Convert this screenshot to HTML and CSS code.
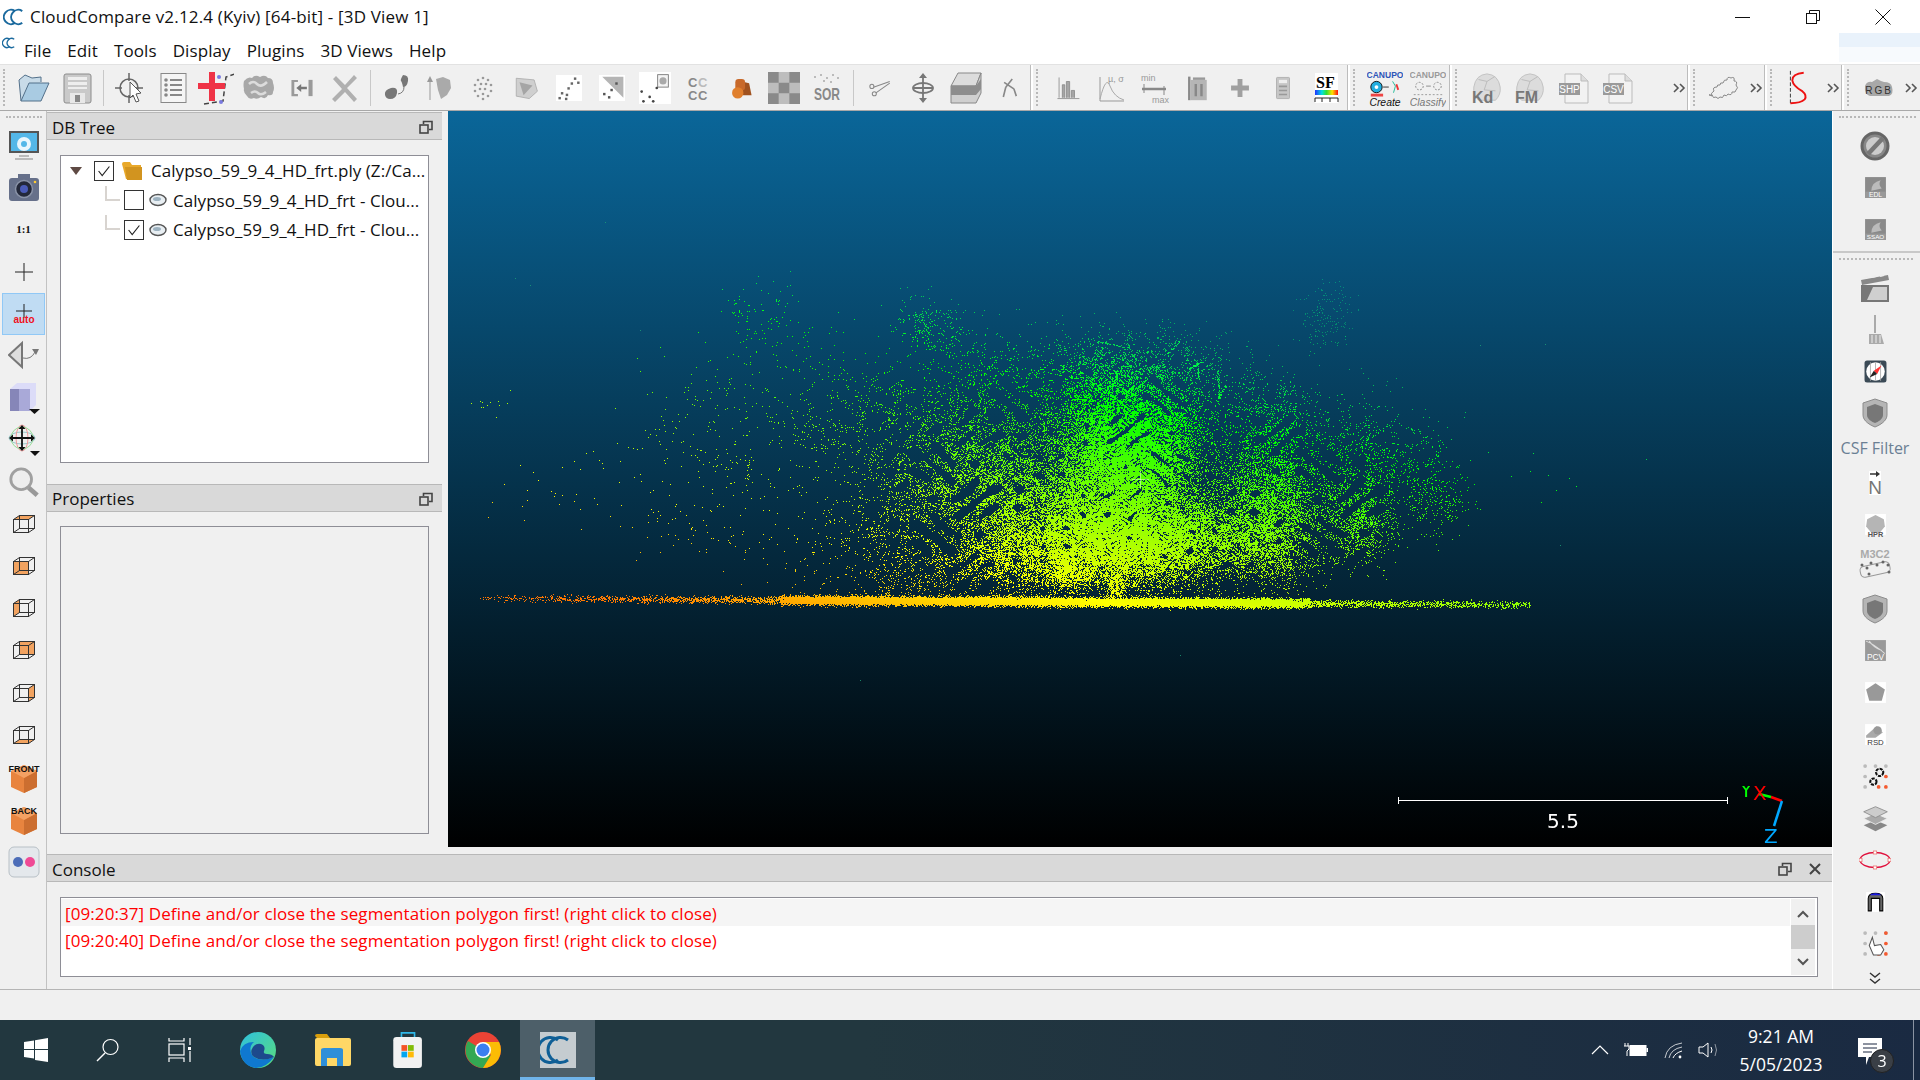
FILE: index.html
```html
<!DOCTYPE html>
<html>
<head>
	<meta charset="utf-8" />
	<title>CloudCompare</title>
	<link rel="stylesheet" href="styles.css">
</head>
<body>
	<svg class="defs" width="0" height="0">
		<symbol id="logo" viewBox="0 0 24 24"><g fill="none" stroke="#1b6a9e" stroke-width="2.2"><path d="M13 5.500A7.800 7.800 0 1 0 13 18.500"/><path d="M21 5.500A7.800 7.800 0 1 0 21 18.500"/></g></symbol>
		<symbol id="float" viewBox="0 0 14 14"><g fill="none" stroke="#444" stroke-width="1.6"><rect x="1" y="5" width="8" height="8"/><path d="M4.5 4V1.500h8.500v8h-3"/></g></symbol>
		<symbol id="chev" viewBox="0 0 14 14"><g fill="none" stroke="#555" stroke-width="1.600"><path d="M2 3l4 4-4 4M8 3l4 4-4 4"/></g></symbol>
		<symbol id="shield" viewBox="0 0 32 32"><path d="M16 2l12 4v12c0 6-7 10-12 12C11 28 4 24 4 18V6z" fill="#b5b5b5" stroke="#8c8c8c"/><path d="M16 7l8 3v8c0 4-5 7-8 8-3-1-8-4-8-8v-8z" fill="#777"/></symbol>
		<symbol id="cloudico" viewBox="0 0 18 14"><ellipse cx="9" cy="7" rx="8" ry="5.500" fill="#e8eef2" stroke="#555" stroke-width="1.400"/><ellipse cx="8" cy="6" rx="4" ry="2" fill="#9db2c0"/></symbol>
		<symbol id="wbox" viewBox="0 0 32 32"><g fill="none" stroke="#333" stroke-width="1"><rect x="5.500" y="10.500" width="15" height="13"/><rect x="11.500" y="6.500" width="15" height="13"/><path d="M5.500 10.500l6-4M20.500 10.500l6-4M20.500 23.500l6-4M5.500 23.500l6-4"/></g></symbol>
	</svg>

	<div class="titlebar">
		<svg class="title-icon"><use href="#logo"/></svg>
		<span class="title-text">CloudCompare v2.12.4 (Kyiv) [64-bit] - [3D View 1]</span>
		<div class="win-btns">
			<svg class="win-btn" viewBox="0 0 16 16"><path d="M0 8.500h15" stroke="#111" fill="none"/></svg>
			<svg class="win-btn" viewBox="0 0 16 16"><g fill="none" stroke="#111"><rect x="1.500" y="4.500" width="10" height="10"/><path d="M4.500 4.500v-3h10v10h-3"/></g></svg>
			<svg class="win-btn" viewBox="0 0 16 16"><path d="M.5.500l15 15M15.500.500l-15 15" stroke="#111" fill="none"/></svg>
		</div>
	</div>

	<div class="menubar">
		<svg class="menu-icon"><use href="#logo"/></svg>
		<span class="menu-item">File</span>
		<span class="menu-item">Edit</span>
		<span class="menu-item">Tools</span>
		<span class="menu-item">Display</span>
		<span class="menu-item">Plugins</span>
		<span class="menu-item">3D Views</span>
		<span class="menu-item">Help</span>
		<div class="menu-tint"></div>
	</div>

	<div class="toolbar">
		<div class="tgroup tgroup-main">
			<span class="handle"></span>
			<span class="tool"><svg viewBox="0 0 32 32"><path d="M3 29L1 8l6-5 7 3 9-1v5" fill="#c8dbe8" stroke="#53708a"/><path d="M3 29l8-18h20l-8 18z" fill="#a9cbe2" stroke="#53708a"/></svg></span>
			<span class="tool"><svg viewBox="0 0 32 32"><rect x="3" y="2" width="27" height="29" rx="2" fill="#c9c9c9" stroke="#8c8c8c"/><path d="M7 5h19v3H7zM7 10h19v3H7zM7 15h19v2H7z" fill="#eee"/><rect x="9" y="21" width="15" height="10" fill="#e8e8e8"/><rect x="14" y="23" width="5" height="7" fill="#888"/></svg></span>
			<span class="tsep"></span>
			<span class="tool"><svg viewBox="0 0 32 32"><g fill="none" stroke="#666" stroke-width="1.500"><circle cx="15" cy="16" r="9"/><path d="M15 1v8M15 23v8M1 16h7M22 16h7"/></g><path d="M16 10l11 11-5 1 3 7-3 1-3-7-3 3z" fill="#fff" stroke="#555"/></svg></span>
			<span class="tool"><svg viewBox="0 0 32 32"><rect x="4" y="1.500" width="25" height="29" fill="#f5f5f5" stroke="#888"/><g fill="#888"><circle cx="9" cy="8" r="1.800"/><circle cx="9" cy="13" r="1.800"/><circle cx="9" cy="18" r="1.800"/><circle cx="9" cy="23" r="1.800"/><path d="M13 7h12v2H13zM13 12h12v2H13zM13 17h12v2H13zM13 22h12v2H13z"/></g></svg></span>
			<span class="tool tool-cut"><svg viewBox="0 0 36 34"><path d="M6 33l19-3 3-24 9-3" fill="none" stroke="#444" stroke-width="1.500" stroke-dasharray="5 3"/><circle cx="21" cy="6" r="2" fill="#7a7ae0"/><circle cx="23" cy="31" r="2" fill="#7a7ae0"/><path d="M11 1h6v11h10v6H17v12h-6V18H0v-6h11z" fill="#ef3346"/></svg></span>
			<span class="tool"><svg viewBox="0 0 32 32"><path d="M1 9q4-5 8-3 3-4 8-1 5-3 8 1 5 0 5 5 2 5 0 9 0 4-5 3-2 5-7 2-4 3-7 1-5 2-7-2-4-4-3-7-1-4 0-8z" fill="#a8a8a8"/><path d="M6 12q4-4 8 0t10-2M8 21q4-3 7 0t8-1" stroke="#dcdcdc" stroke-width="2.500" fill="none"/></svg></span>
			<span class="tool tool-sm"><svg viewBox="0 0 32 32"><g fill="#9a9a9a"><path d="M3 6h8v2.500H6.500v15H11V26H3z"/><path d="M29 6h-5v20h5z"/><path d="M9 16l6-5v3.500h7v3h-7V21z" fill="#777"/></g></svg></span>
			<span class="tool"><svg viewBox="0 0 32 32"><path d="M7 4l9 9 9-10 3 3-10 10 10 11-3 3-9-10-10 10-3-3 10-10L4 7z" fill="#b0b0b0"/></svg></span>
			<span class="tsep"></span>
			<span class="tool"><svg viewBox="0 0 32 32"><path d="M22 3q6 0 5 6t-5 6q-1-5-2-6t2-6zM4 23q-1-5 6-7 7-1 6 5t-7 6q-4 0-5-4z" fill="#777"/><path d="M23 15q0 6-6 7" stroke="#777" fill="none"/></svg></span>
			<span class="tool"><svg viewBox="0 0 32 32"><path d="M6 28V8" stroke="#999" fill="none"/><path d="M6 4L3 10h6z" fill="#999"/><path d="M12 7l7-2 7 3 1 8-4 7-6 4-3-9z" fill="#aaa"/></svg></span>
			<span class="tool"><svg viewBox="0 0 32 32"><g fill="#999"><circle cx="16" cy="6" r="1.300"/><circle cx="11" cy="8" r="1.300"/><circle cx="21" cy="8" r="1.300"/><circle cx="8" cy="13" r="1.300"/><circle cx="14" cy="12" r="1.300"/><circle cx="19" cy="12" r="1.300"/><circle cx="24" cy="13" r="1.300"/><circle cx="8" cy="19" r="1.300"/><circle cx="13" cy="17" r="1.300"/><circle cx="18" cy="17" r="1.300"/><circle cx="24" cy="19" r="1.300"/><circle cx="11" cy="24" r="1.300"/><circle cx="16" cy="22" r="1.300"/><circle cx="21" cy="24" r="1.300"/><circle cx="16" cy="27" r="1.300"/></g></svg></span>
			<span class="tool tool-sm"><svg viewBox="0 0 32 32"><path d="M4 4l22 2 4 14-10 9-16-3z" fill="#cfcfcf" stroke="#aaa"/><path d="M8 9l16 4-11 12z" fill="#a5a5a5"/></svg></span>
			<span class="tool tool-sm"><svg viewBox="0 0 32 32"><rect width="32" height="32" fill="#fff"/><g fill="#666"><rect x="22" y="3" width="3" height="3"/><rect x="26" y="8" width="3" height="3"/><rect x="18" y="9" width="3" height="3"/><rect x="14" y="15" width="3" height="3"/><rect x="6" y="21" width="3" height="3"/><rect x="12" y="23" width="3" height="3"/><rect x="3" y="27" width="3" height="3"/><rect x="11" y="28" width="3" height="3"/></g></svg></span>
			<span class="tool tool-sm"><svg viewBox="0 0 32 32"><rect width="32" height="32" fill="#fff"/><path d="M4 2h26v26z" fill="#b5b5b5"/><g fill="#555"><rect x="20" y="9" width="3" height="3"/><rect x="14" y="17" width="3" height="3"/><rect x="5" y="22" width="3" height="3"/><rect x="11" y="26" width="3" height="3"/></g></svg></span>
			<span class="tool"><svg viewBox="0 0 36 36"><rect width="36" height="36" fill="#fff"/><rect x="21" y="3" width="12" height="14" fill="#f5f5f5" stroke="#777"/><circle cx="27" cy="10" r="4" fill="#aaa"/><g fill="#444"><circle cx="3" cy="22" r="1.500"/><circle cx="5" cy="33" r="1.500"/><circle cx="12" cy="28" r="1.500"/><circle cx="16" cy="33" r="1.500"/><circle cx="20" cy="18" r="1.500"/></g></svg></span>
			<span class="tool"><svg viewBox="0 0 32 32"><text x="6" y="15" class="svg-b" font-size="13" fill="#888">C</text><text x="16" y="15" class="svg-b" font-size="13" fill="#bbb">C</text><text x="6" y="28" class="svg-b" font-size="13" fill="#888">C</text><text x="16" y="28" class="svg-b" font-size="13" fill="#888">C</text></svg></span>
			<span class="tool tool-sm"><svg viewBox="0 0 32 32"><path d="M17 8l9 2 3 15H18z" fill="#a0521f"/><rect x="9" y="5" width="12" height="14" rx="4" fill="#c8692a"/><circle cx="12" cy="22" r="7" fill="#e07f2d"/></svg></span>
			<span class="tool"><svg viewBox="0 0 33 33"><rect width="33" height="33" fill="#8a8a8a"/><path d="M11 0h11v11H11zM0 11h11v11H0zM22 11h11v11H22zM11 22h11v11H11z" fill="#bdbdbd"/></svg></span>
			<span class="tool"><svg viewBox="0 0 32 32"><g fill="#aaa"><circle cx="4" cy="5" r="1"/><circle cx="10" cy="3" r="1"/><circle cx="16" cy="6" r="1"/><circle cx="22" cy="3" r="1"/><circle cx="27" cy="6" r="1"/><circle cx="13" cy="9" r="1"/><circle cx="20" cy="10" r="1"/></g><text x="3" y="28" class="svg-b" font-size="17" fill="#888" textLength="26" lengthAdjust="spacingAndGlyphs">SOR</text></svg></span>
			<span class="tsep"></span>
			<span class="tool tool-sm"><svg viewBox="0 0 32 32"><g fill="none" stroke="#888" stroke-width="1.300"><circle cx="6" cy="14" r="2.500"/><circle cx="9" cy="23" r="2.500"/><path d="M8 15l20-7M11 22l17-12" /></g></svg></span>
			<span class="tool"><svg viewBox="0 0 32 32"><g fill="none" stroke="#777" stroke-width="1.800"><path d="M16 4v24M6 16h20"/><ellipse cx="16" cy="16" rx="10" ry="5"/></g><path d="M16 1l-4 5h8zM16 31l-4-5h8z" fill="#777"/></svg></span>
			<span class="tool"><svg viewBox="0 0 32 32"><path d="M1 14L8 1h23l-5 13z" fill="#dcdcdc" stroke="#888"/><path d="M1 14h25l5-13v20l-5 10H1z" fill="#cfcfcf" stroke="#888"/><path d="M1 14h25l5-7v10l-5 6H1z" fill="#8d8d8d"/></svg></span>
			<span class="tool tool-sm"><svg viewBox="0 0 32 32"><g fill="none" stroke="#888" stroke-width="2"><path d="M20 5l-8 10M10 9l12 8M12 15l-3 12M22 17l3 9"/></g></svg></span>
		</div>
		<div class="tgroup tgroup-sf">
			<span class="handle"></span>
			<span class="tool tool-sm"><svg viewBox="0 0 32 32"><path d="M5 3v25M9 28V12h3v16M14 28V8h4v20M20 28V19h4v9M3 29h27" stroke="#888" fill="#a5a5a5" stroke-width="1"/></svg></span>
			<span class="tool"><svg viewBox="0 0 32 32"><path d="M5 5v24h24" stroke="#999" fill="none"/><path d="M5 27Q11 3 15 14t14 14" stroke="#aaa" fill="none"/><text x="13" y="10" font-size="9" fill="#999" class="svg-t">µ, σ</text></svg></span>
			<span class="tool"><svg viewBox="0 0 32 32"><text x="3" y="9" font-size="9" fill="#999" class="svg-t">min</text><text x="14" y="31" font-size="9" fill="#999" class="svg-t">max</text><path d="M4 17h24" stroke="#888" stroke-width="2.500"/><path d="M6 12v9M26 14v9" stroke="#888"/></svg></span>
			<span class="tool tool-sm"><svg viewBox="0 0 32 32"><path d="M5 2h3v29H5z" fill="#8a8a8a"/><rect x="8" y="6" width="20" height="25" fill="#b5b5b5"/><path d="M11 3h15v3H11z" fill="#999"/><path d="M13 11h3v15h-3zM20 11h3v15h-3z" fill="#888"/></svg></span>
			<span class="tool tool-sm"><svg viewBox="0 0 32 32"><path d="M13 5h6v8h8v6h-8v8h-6v-8H5v-6h8z" fill="#a0a0a0"/></svg></span>
			<span class="tool tool-sm"><svg viewBox="0 0 32 32"><rect x="8" y="3" width="16" height="26" rx="1" fill="#c6c6c6" stroke="#aaa"/><rect x="11" y="6" width="10" height="4" fill="#eee"/><path d="M11 13h10v2H11zM11 18h10v2H11zM11 23h10v2H11z" fill="#999"/></svg></span>
			<span class="tool"><svg viewBox="0 0 32 32"><rect x="5" y="1" width="23" height="30" fill="#fff"/><text x="6" y="16" font-size="16" fill="#000" class="svg-serif">SF</text><defs><linearGradient id="rainbow"><stop offset="0" stop-color="#2030ff"/><stop offset=".3" stop-color="#00e0e0"/><stop offset=".5" stop-color="#30e030"/><stop offset=".75" stop-color="#ffe000"/><stop offset="1" stop-color="#ff1010"/></linearGradient></defs><rect x="5" y="18" width="23" height="5" fill="url(#rainbow)"/><path d="M5 26h23M5 26v4M12 26v4M20 26v4M28 26v4" stroke="#222" fill="none"/></svg></span>
		</div>
		<div class="tgroup tgroup-canupo">
			<span class="handle"></span>
			<span class="tool tool-tall"><svg viewBox="0 0 38 40"><text x="19" y="9" text-anchor="middle" font-size="9" fill="#2c55b8" class="svg-b">CANUPO</text><circle cx="10" cy="19" r="6" fill="#22aee0" stroke="#111"/><circle cx="10" cy="19" r="2" fill="#fff"/><path d="M17 19h6" stroke="#333"/><path d="M27 13l3 5-2 7" stroke="#2b9" fill="none"/><path d="M31 16l2 6" stroke="#e33" stroke-width="2"/><rect x="4" y="26" width="13" height="3" fill="#ee4444"/><text x="19" y="39" text-anchor="middle" font-size="11" fill="#111" class="svg-t" font-style="italic">Create</text></svg></span>
			<span class="tool tool-tall"><svg viewBox="0 0 38 40"><text x="19" y="9" text-anchor="middle" font-size="9" fill="#999" class="svg-b">CANUPO</text><g fill="none" stroke="#888" stroke-dasharray="2 1.500"><circle cx="10" cy="18" r="4"/><circle cx="29" cy="18" r="4"/></g><path d="M17 18h5" stroke="#888"/><path d="M4 27h30" stroke="#999" stroke-dasharray="2 2"/><text x="19" y="39" text-anchor="middle" font-size="11" fill="#777" class="svg-t" font-style="italic">Classify</text></svg></span>
		</div>
		<div class="tgroup tgroup-files">
			<span class="handle"></span>
			<span class="tool"><svg viewBox="0 0 34 34"><path d="M3 16Q5 3 17 2q12 1 14 14 1 8-5 14H8Q2 24 3 16z" fill="#dcdcdc" stroke="#c0c0c0"/><path d="M8 8l9 2 8-5M17 10l-3 9 12 1" stroke="#bbb" fill="none"/><text x="1" y="33" class="svg-b" font-size="17" fill="#777">Kd</text></svg></span>
			<span class="tool"><svg viewBox="0 0 34 34"><path d="M3 16Q5 3 17 2q12 1 14 14 1 8-5 14H8Q2 24 3 16z" fill="#dcdcdc" stroke="#c0c0c0"/><path d="M8 8l9 2 8-5M17 10l-3 9 12 1" stroke="#bbb" fill="none"/><text x="1" y="33" class="svg-b" font-size="17" fill="#777">FM</text></svg></span>
			<span class="tool"><svg viewBox="0 0 32 32"><path d="M7 2h16l7 7v22H7z" fill="#f2f2f2" stroke="#bbb"/><path d="M23 2v7h7" fill="#ddd" stroke="#bbb"/><rect x="1" y="11" width="21" height="12" fill="#9a9a9a"/><text x="11.500" y="21" text-anchor="middle" class="svg-t" font-size="10" fill="#fff">SHP</text></svg></span>
			<span class="tool"><svg viewBox="0 0 32 32"><path d="M7 2h16l7 7v22H7z" fill="#f2f2f2" stroke="#bbb"/><path d="M23 2v7h7" fill="#ddd" stroke="#bbb"/><rect x="1" y="11" width="21" height="12" fill="#9a9a9a"/><text x="11.500" y="21" text-anchor="middle" class="svg-t" font-size="10" fill="#fff">CSV</text></svg></span>
			<svg class="more"><use href="#chev"/></svg>
		</div>
		<div class="tgroup tgroup-one">
			<span class="handle"></span>
			<span class="tool"><svg viewBox="0 0 32 32"><path d="M3 24q-2-3 2-5-2-4 3-4 0-3 3-2 0-3 3-2 1-4 4-3 0-4 4-2 4-2 3 3 4 0 2 4 3 3 0 5 0 3-4 2 0 4-4 2-1 3-4 1-1 4-4 2-2 3-4 0-3 2-4-2-3 1-4-1z" fill="none" stroke="#888"/></svg></span>
			<svg class="more"><use href="#chev"/></svg>
		</div>
		<div class="tgroup tgroup-two">
			<span class="handle"></span>
			<span class="tool tool-s"><svg viewBox="0 0 32 40"><path d="M8 2v36" stroke="#333" stroke-dasharray="4 2" fill="none"/><path d="M22 4Q10 5 10 12q1 6 10 11 6 5 3 9-4 4-15 4" stroke="#ee1111" stroke-width="2" fill="none"/></svg></span>
			<svg class="more"><use href="#chev"/></svg>
		</div>
		<div class="tgroup tgroup-last">
			<span class="handle"></span>
			<span class="tool"><svg viewBox="0 0 32 32"><path d="M2 14q2-5 7-4l5-3 4 2 3 1q7 0 8 5 2 7-3 9H7q-6-2-5-10z" fill="#a8a8a8"/><text x="16" y="22" text-anchor="middle" class="svg-t" font-size="10" letter-spacing="2" fill="#333">RGB</text></svg></span>
			<svg class="more"><use href="#chev"/></svg>
		</div>
	</div>

	<div class="workspace">
		<div class="sidebar-left">
			<span class="tool-handle"></span>
			<span class="vtool"><svg viewBox="0 0 32 32"><rect x="2" y="3" width="28" height="20" fill="#54b7e8" stroke="#555" stroke-width="2"/><circle cx="16" cy="15" r="7" fill="#e9f6fd"/><circle cx="16" cy="15" r="3" fill="#54b7e8"/><path d="M11 26h10v2H11zM7 29h18v2H7z" fill="#bbb"/></svg></span>
			<span class="vtool"><svg viewBox="0 0 32 32"><rect x="1" y="7" width="30" height="23" rx="3" fill="#66708a"/><rect x="10" y="3" width="12" height="6" fill="#66708a"/><circle cx="16" cy="18" r="8.500" fill="#23283a" stroke="#8a93a8" stroke-width="1.500"/><circle cx="16" cy="18" r="4" fill="#4a5bb8"/><circle cx="27" cy="11" r="1.300" fill="#fc3"/></svg></span>
			<span class="vtool"><span class="one-one">1:1</span></span>
			<span class="vtool"><svg viewBox="0 0 32 32"><path d="M16 7v18M7 16h18" stroke="#222" fill="none"/></svg></span>
			<span class="vtool vtool-on"><svg viewBox="0 0 32 32"><path d="M16 6v14M8 13h16" stroke="#222" fill="none"/><text x="16" y="25" text-anchor="middle" class="svg-b" font-size="10" fill="#f01020">auto</text></svg></span>
			<span class="vtool"><svg viewBox="0 0 32 32"><path d="M14 3v24L1 15z" fill="#ddd" stroke="#777" stroke-width="2"/><path d="M15 18q8 2 12-6" stroke="#777" fill="none"/><path d="M31 9l-7 0 4 6z" fill="#777"/></svg></span>
			<span class="vtool"><svg viewBox="0 0 32 32"><path d="M2 7l7-6h19v22l-6 6H2z" fill="#dcdcf8"/><path d="M2 7h20v22H2z" fill="#a9a9d8"/><path d="M2 7h9v22H2z" fill="#8686b8"/><path d="M21 27h11l-5.500 5z" fill="#111"/></svg></span>
			<span class="vtool"><svg viewBox="0 0 32 32"><g fill="none" stroke-width="1"><ellipse cx="14" cy="14" rx="13" ry="6" stroke="#9cc"/><ellipse cx="14" cy="14" rx="6" ry="13" stroke="#e99"/><circle cx="14" cy="14" r="11" stroke="#9d9"/></g><path d="M14 4v20M4 14h20" stroke="#111" stroke-width="1.800"/><path d="M14 1l-3.500 4h7zM14 27l-3.500-4h7zM1 14l4-3.500v7zM27 14l-4-3.500v7z" fill="#111"/><path d="M22 27h10l-5 5z" fill="#111"/></svg></span>
			<span class="vtool"><svg viewBox="0 0 34 34"><circle cx="14" cy="13" r="11" fill="#eee" stroke="#a0a0a0" stroke-width="3"/><path d="M22 22l9 8" stroke="#999" stroke-width="5"/></svg></span>
			<span class="vtool"><svg viewBox="0 0 32 32"><path d="M5.500 10.500l6-4h15l-6 4z" fill="#f2a360"/><use href="#wbox"/></svg></span>
			<span class="vtool"><svg viewBox="0 0 32 32"><rect x="5.500" y="10.500" width="15" height="13" fill="#f2a360"/><use href="#wbox"/></svg></span>
			<span class="vtool"><svg viewBox="0 0 32 32"><path d="M5.500 10.500l6-4v13l-6 4z" fill="#f2a360"/><use href="#wbox"/></svg></span>
			<span class="vtool"><svg viewBox="0 0 32 32"><rect x="11.500" y="6.500" width="15" height="13" fill="#f2a360"/><use href="#wbox"/></svg></span>
			<span class="vtool"><svg viewBox="0 0 32 32"><path d="M20.500 10.500l6-4v13l-6 4z" fill="#f2a360"/><use href="#wbox"/></svg></span>
			<span class="vtool"><svg viewBox="0 0 32 32"><path d="M5.500 23.500l6-4h15l-6 4z" fill="#f2a360"/><use href="#wbox"/></svg></span>
			<span class="vtool"><svg viewBox="0 0 32 32"><path d="M16 3l13 6v16l-13 6-13-6V9z" fill="#e8843f"/><path d="M16 16l13-7v16l-13 6z" fill="#cc6e30"/><path d="M3 9l13-6 13 6-13 7z" fill="#f4a163"/><text x="16" y="10" text-anchor="middle" class="svg-b" font-size="9" fill="#111">FRONT</text></svg></span>
			<span class="vtool"><svg viewBox="0 0 32 32"><path d="M16 3l13 6v16l-13 6-13-6V9z" fill="#e8843f"/><path d="M16 16l13-7v16l-13 6z" fill="#cc6e30"/><path d="M3 9l13-6 13 6-13 7z" fill="#f4a163"/><text x="16" y="10" text-anchor="middle" class="svg-b" font-size="9" fill="#111">BACK</text></svg></span>
			<span class="vtool"><svg viewBox="0 0 32 32"><rect x="1" y="1" width="30" height="30" rx="5" fill="#e4e8ec" stroke="#b8c0c6"/><circle cx="10" cy="16" r="5" fill="#4c6db8"/><circle cx="22" cy="16" r="5" fill="#ef4a95"/></svg></span>
		</div>

		<div class="center">
			<div class="upper">
				<div class="docks">
					<div class="dock-title">DB Tree<svg class="dock-btn"><use href="#float"/></svg></div>
					<div class="tree-box">
						<div class="tree-row">
							<span class="tree-arrow"></span>
							<span class="check is-on"><svg viewBox="0 0 20 20"><path d="M4 10l4 5 8-10" fill="none" stroke="#222" stroke-width="1.300"/></svg></span>
							<svg class="tree-folder" viewBox="0 0 22 20"><path d="M1 3q0-2 2-2h6l2 3h9v14H5z" fill="#e9a92b"/><path d="M4 6h17v13H6z" fill="#d2941f"/></svg>
							<span>Calypso_59_9_4_HD_frt.ply (Z:/Ca...</span>
						</div>
						<div class="tree-row tree-child">
							<span class="tree-line"></span>
							<span class="check"></span>
							<svg class="tree-cloud"><use href="#cloudico"/></svg>
							<span>Calypso_59_9_4_HD_frt - Clou...</span>
						</div>
						<div class="tree-row tree-child">
							<span class="tree-line tree-line-last"></span>
							<span class="check is-on"><svg viewBox="0 0 20 20"><path d="M4 10l4 5 8-10" fill="none" stroke="#222" stroke-width="1.300"/></svg></span>
							<svg class="tree-cloud"><use href="#cloudico"/></svg>
							<span>Calypso_59_9_4_HD_frt - Clou...</span>
						</div>
					</div>
					<div class="dock-title dock-title-props">Properties<svg class="dock-btn"><use href="#float"/></svg></div>
					<div class="props-box"></div>
				</div>
				<div class="view">
					<canvas id="cloud" width="1384" height="736"></canvas>
					<div class="scalebar"><span class="scale-label">5.5</span></div>
					<svg class="axes" viewBox="0 0 60 64"><path d="M46 15l-11-4" stroke="#f00" stroke-width="2.500"/><path d="M35 11l-12-3" stroke="#0f0" stroke-width="2.500"/><path d="M46 15l-8 25" stroke="#00a8ff" stroke-width="2.500"/><text x="4" y="11" class="axis-l" fill="#0f0">Y</text><text x="17" y="14" class="axis-l" fill="#f00">X</text><text x="28" y="57" class="axis-l" fill="#00a8ff">Z</text></svg>
				</div>
			</div>
			<div class="console">
				<div class="dock-title dock-title-console">Console
					<svg class="dock-btn dock-btn-console"><use href="#float"/></svg>
					<svg class="dock-close" viewBox="0 0 12 12"><path d="M1 1l10 10M11 1L1 11" stroke="#444" stroke-width="2"/></svg>
				</div>
				<div class="console-box">
					<div class="console-rows">
						<div class="console-row console-row-alt">[09:20:37] Define and/or close the segmentation polygon first! (right click to close)</div>
						<div class="console-row">[09:20:40] Define and/or close the segmentation polygon first! (right click to close)</div>
					</div>
					<div class="scroll">
						<svg class="scroll-arrow" viewBox="0 0 12 8"><path d="M1 7l5-5 5 5" fill="none" stroke="#555" stroke-width="2"/></svg>
						<div class="scroll-track"><div class="scroll-thumb"></div></div>
						<svg class="scroll-arrow" viewBox="0 0 12 8"><path d="M1 1l5 5 5-5" fill="none" stroke="#555" stroke-width="2"/></svg>
					</div>
				</div>
			</div>
		</div>

		<div class="sidebar-right">
			<div class="rgroup rgroup-top">
				<span class="tool-handle"></span>
				<span class="vtool"><svg viewBox="0 0 32 32"><circle cx="16" cy="16" r="13" fill="#888" stroke="#666" stroke-width="3"/><circle cx="16" cy="16" r="9" fill="#ccc"/><path d="M9 24L24 8" stroke="#777" stroke-width="4.500"/></svg></span>
				<span class="vtool vtool-sm"><svg viewBox="0 0 24 24"><rect x="2" y="2" width="20" height="20" fill="#8a8a8a"/><path d="M8 15q0-8 9-10-3 4 1 8" fill="#bbb"/><rect x="2" y="16" width="20" height="6" fill="#999"/><text x="12" y="21.500" text-anchor="middle" class="svg-t" font-size="6.500" fill="#fff">EDL</text></svg></span>
				<span class="vtool vtool-sm"><svg viewBox="0 0 24 24"><rect x="2" y="2" width="20" height="20" fill="#8a8a8a"/><path d="M8 15q0-8 9-10-3 4 1 8" fill="#bbb"/><rect x="2" y="16" width="20" height="6" fill="#999"/><text x="12" y="21.500" text-anchor="middle" class="svg-t" font-size="6" fill="#fff">SSAO</text></svg></span>
			</div>
			<div class="rgroup">
				<span class="tool-handle"></span>
				<span class="vtool"><svg viewBox="0 0 32 32"><path d="M2 8l27-5 1 5L3 13z" fill="#888"/><path d="M5 6l4-1M13 5l4-1M21 4l4-1" stroke="#eee" stroke-width="2"/><path d="M2 13h28v17H2z" fill="#777"/><path d="M14 15h14v13H8z" fill="#cfcfcf"/></svg></span>
				<span class="vtool"><svg viewBox="0 0 32 32"><path d="M15 1h2v18h-2z" fill="#aaa"/><path d="M10 20h12l3 10H10z" fill="#aaa"/><path d="M13 21v8M17 21v8M21 21v8" stroke="#eee"/></svg></span>
				<span class="vtool vtool-md"><svg viewBox="0 0 32 32"><rect x="3" y="3" width="26" height="26" rx="3" fill="#3b4a56"/><circle cx="16" cy="16" r="11" fill="#fff"/><path d="M10 5v22M16 5v22M22 5v22" stroke="#aaa"/><path d="M23 9l-5 10-4-4z" fill="#f33"/><path d="M9 23l5-8 4 4z" fill="#222"/></svg></span>
				<span class="vtool"><svg><use href="#shield"/></svg></span>
				<span class="csf">CSF Filter</span>
				<span class="vtool vtool-n"><svg viewBox="0 0 24 24"><rect x="6" y="0" width="12" height="24" fill="#fff"/><path d="M7 3h8" stroke="#333" stroke-width="1.500"/><path d="M13 0l4 3-4 3z" fill="#333"/><text x="12" y="23" text-anchor="middle" class="svg-t" font-size="19" fill="#777">N</text></svg></span>
				<span class="vtool vtool-sm"><svg viewBox="0 0 24 24"><rect x="2" y="1" width="20" height="20" fill="#fff"/><path d="M12 2l8 4 1 7-5 6H8l-5-6 1-7z" fill="#b5b5b5"/><text x="12" y="23" text-anchor="middle" class="svg-b" font-size="7" fill="#555">HPR</text></svg></span>
				<span class="vtool vtool-m3c2"><svg viewBox="0 0 36 36"><text x="18" y="9" text-anchor="middle" class="svg-b" font-size="11" fill="#aaa">M3C2</text><rect x="3" y="15" width="30" height="11" rx="4" transform="rotate(-12 18 20)" fill="none" stroke="#999"/><g fill="#666"><circle cx="5" cy="16" r="1.500"/><circle cx="10" cy="19" r="1.500"/><circle cx="14" cy="14" r="1.500"/><circle cx="20" cy="16" r="1.500"/><circle cx="26" cy="13" r="1.500"/><circle cx="31" cy="16" r="1.500"/><circle cx="12" cy="25" r="1.500"/><circle cx="32" cy="23" r="1.500"/></g></svg></span>
				<span class="vtool"><svg><use href="#shield"/></svg></span>
				<span class="vtool vtool-sm"><svg viewBox="0 0 24 24"><rect x="2" y="2" width="20" height="20" fill="#999"/><path d="M3 3q8 3 18 12M6 3q4 6 12 9" stroke="#ddd" fill="none"/><text x="12" y="21" text-anchor="middle" class="svg-t" font-size="8" fill="#fff">PCV</text></svg></span>
				<span class="vtool vtool-sm"><svg viewBox="0 0 24 24"><rect x="2" y="2" width="20" height="20" fill="#fff"/><path d="M12 3l9 6-3 11H6L3 9z" fill="#999"/></svg></span>
				<span class="vtool vtool-sm"><svg viewBox="0 0 24 24"><rect x="2" y="2" width="20" height="20" fill="#fff"/><path d="M3 13l10-9 6 6-7 5H3z" fill="#aaa"/><circle cx="14" cy="8" r="4" fill="#999"/><text x="12" y="22" text-anchor="middle" class="svg-t" font-size="7.500" fill="#333">RSD</text></svg></span>
				<span class="vtool vtool-md"><svg viewBox="0 0 26 26"><g fill="#bbb"><circle cx="3" cy="3" r="1.800"/><circle cx="13" cy="3" r="1.800"/><circle cx="23" cy="3" r="1.800"/><circle cx="3" cy="13" r="1.800"/><circle cx="3" cy="23" r="1.800"/></g><g fill="#f45a30"><circle cx="23" cy="13" r="1.800"/><circle cx="23" cy="23" r="1.800"/><circle cx="16" cy="23" r="1.800"/></g><g fill="none" stroke="#111" stroke-width="2"><circle cx="17" cy="9" r="3.500" stroke-dasharray="3 1"/><circle cx="11" cy="18" r="3" stroke-dasharray="3 1"/></g></svg></span>
				<span class="vtool vtool-md"><svg viewBox="0 0 32 32"><path d="M16 18l14 6-14 7-14-7z" fill="#888"/><path d="M16 10l14 6-14 7-14-7z" fill="#aaa" stroke="#eee"/><path d="M16 2l14 6-14 7L2 8z" fill="#ccc" stroke="#888"/></svg></span>
				<span class="vtool"><svg viewBox="0 0 32 32"><ellipse cx="16" cy="16" rx="15" ry="7.500" fill="none" stroke="#e0103c" stroke-width="1.300"/><g fill="#fff" stroke="#e88"><rect x="14.500" y="7" width="3" height="3"/><rect x="14.500" y="22" width="3" height="3"/><rect x="0" y="14.500" width="3" height="3"/><rect x="29" y="14.500" width="3" height="3"/></g></svg></span>
				<span class="vtool vtool-sm"><svg viewBox="0 0 24 24"><rect x="3" y="3" width="18" height="19" fill="#fff"/><path d="M5 21V9q0-5 7-5t7 5v12h-3V9H8v12z" fill="#666" stroke="#000"/><path d="M7 6q0-2 5-2t5 2z" fill="#1a1ae0"/></svg></span>
				<span class="vtool vtool-md"><svg viewBox="0 0 26 26"><g fill="#bbb"><circle cx="3" cy="3" r="1.800"/><circle cx="13" cy="3" r="1.800"/><circle cx="23" cy="3" r="1.800"/><circle cx="3" cy="13" r="1.800"/><circle cx="3" cy="23" r="1.800"/></g><g fill="#f45a30"><circle cx="23" cy="13" r="1.800"/><circle cx="23" cy="23" r="1.800"/><circle cx="16" cy="23" r="1.800"/><circle cx="23" cy="3" r="1.800"/></g><path d="M10 7l2 8 6-1 3 5-3 5h-7l-4-9z" fill="#fff" stroke="#555"/></svg></span>
				<svg class="vchev" viewBox="0 0 14 14"><path d="M2 2l5 4 5-4M2 8l5 4 5-4" fill="none" stroke="#333" stroke-width="1.400"/></svg>
			</div>
		</div>
	</div>

	<div class="statusbar"></div>

	<div class="taskbar">
		<span class="task"><svg viewBox="0 0 24 24"><path d="M0 4l10-1.500V11H0zM11 2.300L24 0v11H11zM0 12h10v8.500L0 19zM11 12h13v12l-13-2z" fill="#fff"/></svg></span>
		<span class="task"><svg viewBox="0 0 24 24"><circle cx="14.500" cy="9" r="7.500" fill="none" stroke="#fff" stroke-width="1.200"/><path d="M9 15L1 23" stroke="#fff" stroke-width="1.400"/></svg></span>
		<span class="task"><svg viewBox="0 0 24 24"><g fill="none" stroke="#fff" stroke-width="1.200"><path d="M1 0v3h15V0M1 24v-4h15v4"/><rect x="1" y="6" width="15" height="11"/><path d="M22 0v7M22 13v11"/></g><rect x="20" y="9" width="3" height="3" fill="#fff"/></svg></span>
		<span class="task-gap"></span>
		<span class="task-app"><svg viewBox="0 0 36 36"><defs><linearGradient id="edgeA" x1="0" y1="0" x2="1" y2="1"><stop offset="0" stop-color="#2ec0e0"/><stop offset="1" stop-color="#5bdd7a"/></linearGradient></defs><circle cx="18" cy="18" r="18" fill="url(#edgeA)"/><path d="M34 25Q26 36 16 36 2 34 0 19 3 10 14 10q-6 5-2 13 6 8 22 2z" fill="#0f78d0"/><path d="M34 25q-12 5-20 0-5-4-1-10 3-4 8-3 5 2 3 7-1 3 3 3 5 0 7 3z" fill="#1d4a8c"/></svg></span>
		<span class="task-app"><svg viewBox="0 0 36 32"><path d="M0 2q0-2 2-2h10l3 4H2z" fill="#d99e0b"/><rect y="4" width="36" height="28" rx="2" fill="#ffd766"/><path d="M6 32V16q0-2 3-2h16q3 0 3 2v16h-6v-8H12v8z" fill="#2f8fd8"/><rect x="12" y="24" width="10" height="8" fill="#ffd766"/></svg></span>
		<span class="task-app"><svg viewBox="0 0 36 44"><path d="M10 8V1h16v7" fill="none" stroke="#30b8e8" stroke-width="2"/><rect y="6" width="35" height="38" rx="4" fill="#f2f2f2"/><rect x="10" y="16" width="7" height="7" fill="#f35325"/><rect x="18" y="16" width="7" height="7" fill="#81bc06"/><rect x="10" y="24" width="7" height="7" fill="#05a6f0"/><rect x="18" y="24" width="7" height="7" fill="#ffba08"/></svg></span>
		<span class="task-app"><svg viewBox="0 0 36 36"><circle cx="18" cy="18" r="18" fill="#ea4335"/><path d="M18 18L3 9A18 18 0 0 0 18 36l8-12z" fill="#34a853"/><path d="M18 10h16a18 18 0 0 1-16 26l8-13z" fill="#fbbc05"/><circle cx="18" cy="18" r="8" fill="#fff"/><circle cx="18" cy="18" r="6.500" fill="#3a7ff0"/></svg></span>
		<span class="task-app task-active"><svg viewBox="0 0 36 36"><rect width="36" height="36" fill="#c5ccd0"/><g fill="none" stroke="#0f5f96" stroke-width="3"><path d="M18 8A12.500 12.500 0 1 0 18 28"/><path d="M28 8A12.500 12.500 0 1 0 28 28"/></g></svg></span>
		<div class="tray">
			<span class="tray-cell"><svg class="tray-chev" viewBox="0 0 18 10"><path d="M1 9l8-8 8 8" fill="none" stroke="#fff" stroke-width="1.200"/></svg></span>
			<span class="tray-cell"><svg class="tray-batt" viewBox="0 0 24 14"><path d="M1 0v3M4 0v3M0 3h5v3L3 8v5" stroke="#fff" fill="none"/><rect x="6" y="2.500" width="16" height="10" fill="#fff" stroke="#fff"/><rect x="22.500" y="5" width="1.500" height="4" fill="#fff"/></svg></span>
			<span class="tray-cell tray-cell-wifi"><svg class="tray-wifi" viewBox="0 0 20 18"><g fill="none" stroke="#fff" stroke-width="1"><path d="M1 17Q3 4 18 2" stroke-opacity=".75"/><path d="M5 17Q7 8 18 6" stroke-opacity=".75"/><path d="M9 17Q11 12 18 10"/></g><circle cx="16" cy="16" r="1.400" fill="#fff"/></svg></span>
			<span class="tray-cell tray-cell-sound"><svg class="tray-sound" viewBox="0 0 22 18"><path d="M1 6h4l5-4v14l-5-4H1z" fill="none" stroke="#fff"/><path d="M13 6q2 3 0 6" fill="none" stroke="#fff"/><path d="M17 3q3 6 0 12" fill="none" stroke="#fff" stroke-opacity=".5"/></svg></span>
			<div class="clock"><span>9:21 AM</span><span>5/05/2023</span></div>
			<div class="notify">
				<svg class="notify-ico" viewBox="0 0 24 28"><path d="M0 0h24v19H11l-3 8v-8H0z" fill="#fff"/><path d="M5 6h14M5 10h14M5 14h9" stroke="#1a2740" stroke-width="1"/></svg>
				<span class="badge">3</span>
			</div>
			<span class="tray-end"></span>
		</div>
	</div>

	<script src="app.js"></script>
</body>
</html>
```

FILE: styles.css
```css
*{margin: 0;padding: 0;box-sizing: border-box;}
html,body{width: 1920px;height: 1080px;overflow: hidden;}
body{
	display: flex;
	flex-direction: column;
	background: #f0f0f0;
	font-family: "Open Sans", "Liberation Sans", sans-serif;
	font-size: 17px;
	color: #111;
}
svg{display: block;}
.defs{position: absolute;}
.svg-b{font-family: "Liberation Sans", sans-serif;font-weight: bold;}
.svg-t{font-family: "Liberation Sans", sans-serif;}
.svg-serif{font-family: "Liberation Serif", serif;font-weight: bold;}

/* title + menu */
.titlebar{
	height: 33px;
	background: #fff;
	display: flex;
	align-items: center;
	flex-shrink: 0;
}
.title-icon{width: 22px;height: 22px;margin-left: 3px;}
.title-text{margin-left: 5px;font-size: 17px;letter-spacing: .17px;}
.win-btns{
	margin-left: auto;
	display: flex;
	gap: 54px;
	padding-right: 29px;
}
.win-btn{width: 16px;height: 16px;}
.menubar{
	height: 31px;
	background: #fff;
	display: flex;
	align-items: center;
	flex-shrink: 0;
	padding-left: 2px;
}
.menu-icon{width: 14px;height: 14px;margin-top: -12px;margin-right: 8px;}
.menu-item{font-size: 17px;margin-right: 16px;padding-top: 3px;letter-spacing: .1px;}
.menu-tint{
	margin-left: auto;
	width: 81px;
	height: 29px;
	background: linear-gradient(#e9f2fb 50%, #f7fafd 50%);
	align-self: flex-start;
}

/* top toolbar */
.toolbar{
	height: 47px;
	flex-shrink: 0;
	display: flex;
	background: #f0f0f0;
	border-top: 1px solid #e2e2e2;
	border-bottom: 1px solid #a8a8a8;
}
.tgroup{
	display: flex;
	align-items: center;
	position: relative;
	border-right: 2px solid #fff;
	box-shadow: inset -1px 0 #bcbcbc;
	padding-left: 12.500px;
	flex-shrink: 0;
}
.tgroup-main{width: 1033px;}
.tgroup-sf{width: 317px;}
.tgroup-canupo{width: 102px;}
.tgroup-files{width: 238px;}
.tgroup-one{width: 77px;}
.tgroup-two{width: 77px;}
.tgroup-last{width: 76px;border-right: 0;box-shadow: none;}
.tgroup-files .tool{width: 43.600px;}
.tgroup-two .tool{margin-left: -4px;}
.handle{
	position: absolute;
	left: 3px;
	top: 4px;
	bottom: 4px;
	width: 3px;
	border-left: 2px dotted #b8b8b8;
}
.tool{
	width: 43px;
	height: 44px;
	display: flex;
	align-items: center;
	justify-content: center;
	flex-shrink: 0;
}
.tool svg{width: 32px;height: 32px;}
.tool-sm svg{width: 26px;height: 26px;}
.tool-cut svg{width: 36px;height: 34px;}
.tool-tall svg{width: 36px;height: 38px;}
.tool-s svg{width: 32px;height: 38px;}
.tsep{
	width: 9.500px;
	height: 36px;
	flex-shrink: 0;
	background: linear-gradient(#c8c8c8,#c8c8c8) center / 1px 100% no-repeat;
}
.more{
	width: 14px;
	height: 14px;
	margin-left: auto;
	margin-right: 2px;
	flex-shrink: 0;
}
.tgroup-sf,.tgroup-canupo,.tgroup-files,.tgroup-one,.tgroup-two,.tgroup-last{padding-left: 13px;}

/* workspace */
.workspace{
	height: 879px;
	flex-shrink: 0;
	display: flex;
	border-bottom: 1px solid #b5b5b5;
}
.sidebar-left{
	width: 47px;
	flex-shrink: 0;
	border-right: 1px solid #c2c2c2;
	display: flex;
	flex-direction: column;
	padding-top: 13px;
	position: relative;
}
.tool-handle{
	position: absolute;
	left: 6px;
	right: 4px;
	top: 5px;
	height: 2px;
	border-top: 2px dotted #b8b8b8;
}
.vtool{
	height: 42.200px;
	flex-shrink: 0;
	display: flex;
	align-items: center;
	justify-content: center;
}
.vtool svg{width: 32px;height: 32px;}
.sidebar-left .vtool{margin-left: 2px;width: 43px;}
.vtool-on{
	background: #c0dcf3;
	border: 1px solid #90c8f6;
}
.one-one{font: bold 11px "Liberation Serif", serif;color: #111;}

.center{flex: 1;display: flex;flex-direction: column;min-width: 0;}
.upper{height: 736px;display: flex;flex-shrink: 0;}
.docks{width: 401px;flex-shrink: 0;display: flex;flex-direction: column;}
.dock-title{
	height: 28px;
	background: #d9d9d9;
	border-top: 1px solid #b8b8b8;
	border-bottom: 1px solid #b8b8b8;
	display: flex;
	align-items: center;
	padding-left: 5px;
	padding-top: 2px;
	position: relative;
	width: 395px;
	flex-shrink: 0;
	font-size: 17px;
	margin-top: 1px;
}
.dock-title-props{margin-top: 0;padding-top: 1px;}
.dock-btn{
	position: absolute;
	right: 9px;
	top: 7px;
	width: 14px;
	height: 14px;
}
.tree-box{
	margin: 15px 13px 21px;
	height: 308px;
	width: 369px;
	background: #fff;
	border: 1px solid #8e8e96;
	flex-shrink: 0;
	font-size: 17px;
	letter-spacing: .05px;
}
.props-box{
	margin: 14px 13px 0;
	height: 308px;
	width: 369px;
	background: #f0f0f0;
	border: 1px solid #8e8e96;
	flex-shrink: 0;
}
.tree-row{
	height: 29.500px;
	display: flex;
	align-items: center;
	white-space: nowrap;
	position: relative;
	overflow: hidden;
}
.tree-arrow{
	margin-left: 9px;
	border-left: 6px solid transparent;
	border-right: 6px solid transparent;
	border-top: 8px solid #5f4a44;
}
.check{
	width: 20px;
	height: 20px;
	border: 1px solid #333;
	background: #fff;
	flex-shrink: 0;
}
.tree-arrow + .check{margin-left: 12px;}
.tree-folder{width: 22px;height: 20px;margin: 0 8px 0 7px;flex-shrink: 0;}
.tree-child .check{margin-left: 63px;}
.tree-cloud{width: 18px;height: 14px;margin: 0 6px 0 5px;flex-shrink: 0;}
.tree-line{
	position: absolute;
	left: 44px;
	top: -7px;
	width: 15px;
	height: 22px;
	border-left: 2px solid #d8d4d0;
	border-bottom: 2px solid #d8d4d0;
}
.view{
	flex: 1;
	position: relative;
	background: linear-gradient(#0a6699, #000);
	overflow: hidden;
}
#cloud{position: absolute;left: 0;top: 0;}
.scalebar{
	position: absolute;
	left: 950px;
	top: 686px;
	width: 330px;
	height: 7px;
	border-left: 1px solid #fff;
	border-right: 1px solid #fff;
	background: linear-gradient(#fff,#fff) center / 100% 1px no-repeat;
	color: #fff;
	text-align: center;
}
.scale-label{
	position: absolute;
	left: 0;
	right: 0;
	top: 12px;
	font: 20px "DejaVu Sans", sans-serif;
}
.axes{
	position: absolute;
	left: 1288px;
	top: 675px;
	width: 60px;
	height: 64px;
}
.axis-l{font: 20px "DejaVu Sans", sans-serif;}

.console{flex: 1;display: flex;flex-direction: column;padding-top: 7px;}
.dock-title-console{width: 100%;margin-top: 0;}
.dock-btn-console{right: 40px;}
.dock-close{
	position: absolute;
	right: 11px;
	top: 8px;
	width: 12px;
	height: 12px;
}
.console-box{
	margin: 15px 14px 0 13px;
	height: 80px;
	border: 1px solid #8e8e96;
	background: #fff;
	display: flex;
	padding: 1px 2px 1px 0;
}
.console-rows{flex: 1;color: #f00;font-size: 17px;letter-spacing: .09px;}
.console-row{height: 27px;padding-left: 4px;padding-top: 1px;line-height: 27px;white-space: nowrap;}
.console-row-alt{background: #f5f5f5;}
.scroll{
	width: 24px;
	margin-left: 1px;
	background: #f0f0f0;
	display: flex;
	flex-direction: column;
	align-items: center;
	justify-content: space-between;
	padding-top: 11px;
	padding-bottom: 9px;
	position: relative;
}
.scroll-arrow{width: 12px;height: 8px;}
.scroll-track{position: absolute;left: 0;right: 0;top: 26px;height: 24px;}
.scroll-thumb{height: 100%;background: #cdcdcd;}

.sidebar-right{width: 88px;flex-shrink: 0;border-left: 1px solid #fff;padding-right: 3px;}
.rgroup{position: relative;padding-top: 14px;display: flex;flex-direction: column;align-items: center;}
.rgroup-top{height: 142px;border-bottom: 2px solid #c8c8c8;margin-right: -3px;padding-right: 3px;}
.rgroup .vtool{height: 41.850px;width: 100%;}
.rgroup .vtool-sm svg{width: 25px;height: 25px;}
.rgroup .vtool-md svg{width: 27px;height: 27px;}
.csf{
	height: 28px;
	line-height: 28px;
	color: #6b7f94;
	font-size: 16px;
	flex-shrink: 0;
}
.rgroup .vtool-n svg{width: 24px;height: 24px;}
.rgroup .vtool-m3c2 svg{width: 36px;height: 36px;}
.vchev{width: 14px;height: 14px;margin-top: 6px;}

.statusbar{height: 30px;flex-shrink: 0;background: #f0f0f0;}

/* windows taskbar */
.taskbar{
	height: 60px;
	flex-shrink: 0;
	display: flex;
	align-items: center;
	background: linear-gradient(90deg, #22373f 0%, #22373f 45%, #1a2a42 100%);
	color: #fff;
}
.task{width: 72px;display: flex;justify-content: center;}
.task svg{width: 24px;height: 24px;}
.task-gap{width: 4px;}
.task-app{
	width: 75px;
	height: 60px;
	display: flex;
	align-items: center;
	justify-content: center;
}
.task-app svg{width: 36px;height: 36px;}
.task-active{background: #4d5f69;border-bottom: 3px solid #70b4ea;padding-top: 3px;}
.tray{margin-left: auto;display: flex;align-items: center;height: 60px;}
.tray-cell{width: 36px;display: flex;justify-content: center;}
.tray-cell-wifi{width: 40px;}
.tray-cell-sound{width: 30px;}
.tray-chev{width: 18px;height: 10px;}
.tray-batt{width: 24px;height: 14px;}
.tray-wifi{width: 20px;height: 18px;}
.tray-sound{width: 22px;height: 18px;}
.clock{
	width: 116px;
	padding-right: 2px;
	display: flex;
	flex-direction: column;
	align-items: center;
	font-size: 17.500px;
	line-height: 28px;
}
.notify{width: 60px;height: 60px;position: relative;}
.notify-ico{position: absolute;left: 18px;top: 18px;width: 24px;height: 28px;}
.badge{
	position: absolute;
	left: 30px;
	top: 29px;
	width: 24px;
	height: 24px;
	border-radius: 50%;
	background: #3a3f46;
	border: 1px solid #222;
	font-size: 16px;
	text-align: center;
	line-height: 22px;
}
.tray-end{
	width: 20px;
	height: 60px;
	background: linear-gradient(#8a93a2,#8a93a2) 13px 0 / 1px 100% no-repeat;
}
```

FILE: app.js
```js
// point cloud on the 3D view, drawn pixel by pixel. seeded so it stays the same every load
window.onload=function(){
	var canvas=document.getElementById('cloud');
	var ctx=canvas.getContext('2d');
	var OX=448, OY=111;

	var seed=20230505;
	function rnd(){
		seed=(seed+0x6D2B79F5)|0;
		var t=Math.imul(seed^(seed>>>15),1|seed);
		t=(t+Math.imul(t^(t>>>7),61|t))^t;
		return ((t^(t>>>14))>>>0)/4294967296;
	}
	function gauss(){
		return (rnd()+rnd()+rnd()+rnd()-2)*1.7;
	}
	// wavy noise 0..1, gives leafy gaps without a visible grid
	function noise(x,y,f,k){
		var a=Math.sin(x*f+2.3*Math.sin(y*f*.71+k));
		var b=Math.cos(y*f*1.3+2.1*Math.sin(x*f*.63+k*2));
		return .5+.5*a*b;
	}
	function plot(x,y,alpha){
		var h=62+(x-1130)*0.065+(601-y)*0.3;
		if(h<28)h=28;
		if(h>125){
			alpha*=Math.max(0.35,1-(h-125)/50);
		}
		if(h>135)h=135+(h-135)*0.5;
		ctx.fillStyle='hsla('+h+',100%,50%,'+alpha+')';
		ctx.fillRect(Math.round(x)-OX,Math.round(y)-OY,1,1);
	}

	// cx, cy, sx, sy, count, fine gap limit, coarse gap limit
	var blobs=[
		[1118,505,40,40,19000,.16,.06],
		[1120,542,56,18,16000,.16,.06],
		[1132,450,32,26,10000,.2,.1],
		[1125,405,40,28,6000,.26,.18],
		[1130,365,50,20,1500,.3,.3],
		[1068,572,13,8,900,.2,0],
		[1115,585,5,9,320,.15,0],
		[1269,507,25,34,6000,.25,.15],
		[1262,540,38,20,2200,.3,.2],
		[1269,427,24,30,1500,.3,.25],
		[1200,535,40,25,3500,.28,.18],
		[1358,520,17,22,1700,.3,.25],
		[1358,467,36,36,1700,.32,.3],
		[1425,480,16,24,300,.3,.3],
		[1445,500,13,18,190,.3,.25],
		[1020,520,32,35,5000,.28,.22],
		[975,480,40,38,5200,.3,.28],
		[1000,565,48,13,1800,.3,.2],
		[912,520,40,34,1400,.32,.35],
		[890,417,38,30,1000,.32,.38],
		[1000,400,32,36,1400,.32,.35],
		[934,335,20,18,300,.3,.38],
		[905,590,30,13,320,.3,.3],
		[830,555,24,24,220,.3,.3],
		[735,453,55,50,520,.2,.4],
		[760,320,22,25,140,.15,.3],
		[918,320,14,14,140,.2,.3],
		[815,400,55,45,340,.2,.4],
		[560,490,45,20,26,0,0],
		[484,405,12,12,12,0,0],
		[1327,315,15,16,240,.15,.25],
		[700,530,50,20,55,0,.2],
		[1500,470,60,30,12,0,0]
	];
	for(var b=0;b<blobs.length;b++){
		var p=blobs[b];
		for(var i=0;i<p[4];i++){
			var x=p[0]+gauss()*p[2];
			var y=p[1]+gauss()*p[3];
			if(y>597)continue;
			if(noise(x,y,.55,1.3)<p[5])continue;
			if(noise(x,y,.13,4.1)<p[6])continue;
			plot(x,y,1);
		}
	}

	// branches
	var lines=[[1217,367,1218,397],[1179,340,1166,353],[1188,368,1202,360],[1196,362,1198,378],[1092,340,1120,345],[1225,385,1215,400]];
	for(var k=0;k<lines.length;k++){
		var s=lines[k];
		for(var j=0;j<36;j++){
			var f=rnd();
			plot(s[0]+(s[2]-s[0])*f+rnd()*1.6,s[1]+(s[3]-s[1])*f+rnd()*1.6,1);
		}
	}

	// ground strip
	for(var g=0;g<26000;g++){
		var gx=480+rnd()*1050;
		var dense=1;
		if(gx<780)dense=0.03+(gx-480)/300*0.25;
		if(gx>1310)dense=0.3-(gx-1310)/220*0.2;
		if(rnd()>dense)continue;
		var thick=(gx>780&&gx<1310)?2.4:1.8;
		var gy=598+(gx-480)/1050*6.5+gauss()*thick;
		plot(gx,gy,1);
	}
	// bright core of the strip
	for(var c=0;c<14000;c++){
		var cx2=790+rnd()*500;
		plot(cx2,600+(cx2-790)/500*2.5+(rnd()-0.5)*6,1);
	}

	// center cross of the view
	ctx.fillStyle='rgba(255,255,255,.45)';
	ctx.fillRect(1140-OX-8,479-OY,17,1);
	ctx.fillRect(1140-OX,479-OY-8,1,17);

	// few stray points up in the sky
	var strays=[[515,278],[530,285],[640,330],[605,222],[1270,540],[1560,545],[1480,345],[860,680],[1180,655],[1545,344]];
	for(var n=0;n<strays.length;n++){
		ctx.fillStyle='rgba(30,160,120,.8)';
		ctx.fillRect(strays[n][0]-OX,strays[n][1]-OY,1,1);
	}
}
```
